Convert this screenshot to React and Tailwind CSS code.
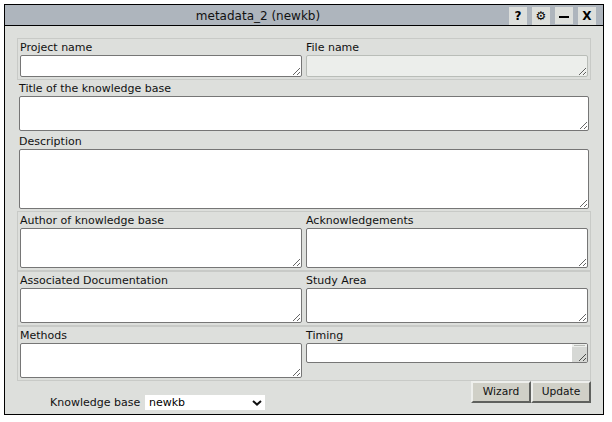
import React from "react";

function Area({ className, disabled, label }) {
  return (
    <textarea
      aria-label={label}
      disabled={disabled}
      className={`block resize rounded-[2px] border p-[2px] text-[11px] leading-[13px] outline-none ${
        disabled ? "border-[#b9bdb8] bg-[#eceeeb]" : "border-[#767676] bg-white"
      } ${className}`}
    />
  );
}

function Field({ label, area, disabled, children }) {
  return (
    <div className="w-[282px]">
      <div className="h-[16px] leading-[18px]">{label}</div>
      {children || <Area label={label} className={`w-full ${area}`} disabled={disabled} />}
    </div>
  );
}

function Pair({ children, className }) {
  return (
    <div className={`flex w-[574px] gap-[4px] border border-[#c8cac7] px-[2px] ${className}`}>
      {children}
    </div>
  );
}

function Wide({ label, className, area }) {
  return (
    <div className={`ml-[2px] w-[570px] ${className}`}>
      <div className="h-[16px] leading-[18px]">{label}</div>
      <Area label={label} className={`w-full ${area}`} />
    </div>
  );
}

function TitleButton({ children, className = "h-[18px] font-bold" }) {
  return (
    <button
      className={`flex w-[18px] items-center justify-center bg-[#dddfdc] text-[12px] leading-none text-black ${className}`}
    >
      {children}
    </button>
  );
}

function PushButton({ children }) {
  return (
    <button className="h-[22px] w-[60px] border-2 border-t-[#eeefec] border-l-[#eeefec] border-r-[#5f615e] border-b-[#5f615e] bg-[#d0d0c7] text-[10.67px] leading-[16px] text-[#111]">
      {children}
    </button>
  );
}

export default function App() {
  return (
    <div className="h-[422px] w-[612px] bg-white pt-[4px] pl-[4px] font-['DejaVu_Sans',sans-serif] text-[11px] text-[#111]">
      <div className="h-[411px] w-[600px] border border-black bg-[#dddfdc]">
        <div className="flex h-[21px] border-b border-black bg-[#aeb5bd]">
          <div className="flex-1 pl-[2px] text-center text-[12px] leading-[22px]">metadata_2 (newkb)</div>
          <div className="flex gap-[5px] pt-[2px] pr-[7px]">
            <TitleButton>?</TitleButton>
            <TitleButton className="h-[18px] font-normal">⚙</TitleButton>
            <TitleButton className="h-[17px]">
              <span className="mt-[3px] h-[2px] w-[10px] bg-black" />
            </TitleButton>
            <TitleButton>X</TitleButton>
          </div>
        </div>
        <div className="pt-[12px] pl-[12px]">
          <Pair className="h-[42px]">
            <Field label="Project name" area="h-[22px]" />
            <Field label="File name" area="h-[22px]" disabled />
          </Pair>
          <Wide label="Title of the knowledge base" area="h-[35px]" />
          <Wide label="Description" className="mt-[2px]" area="h-[60px]" />
          <Pair className="mt-[2px] h-[60px]">
            <Field label="Author of knowledge base" area="h-[40px]" />
            <Field label="Acknowledgements" area="h-[40px]" />
          </Pair>
          <Pair className="h-[55px]">
            <Field label="Associated Documentation" area="h-[35px]" />
            <Field label="Study Area" area="h-[35px]" />
          </Pair>
          <Pair className="h-[55px]">
            <Field label="Methods" area="h-[35px]" />
            <Field label="Timing">
              <div className="flex h-[20px] justify-end overflow-hidden rounded-[2px] border border-[#767676] bg-white">
                <svg width="15" height="18" viewBox="0 0 15 18" shapeRendering="crispEdges">
                  <rect width="15" height="18" fill="#d6d8d5" />
                  <rect width="15" height="3" fill="#eceeeb" />
                  <rect x="2" y="1" width="11" height="1" fill="#b9bcb8" />
                  <path
                    d="M7 16h1v1h-1zM8 15h1v1h-1zM9 14h1v1h-1zM10 13h1v1h-1zM11 12h1v1h-1zM12 11h1v1h-1zM13 10h1v1h-1zM11 16h1v1h-1zM12 15h1v1h-1zM13 14h1v1h-1z"
                    fill="#4d4f4c"
                  />
                </svg>
              </div>
            </Field>
          </Pair>
          <div className="flex w-[574px] justify-between">
            <div className="mt-[14px] ml-[33px] flex h-[15px] leading-[15px]">
              <span className="w-[95px]">Knowledge base</span>
              <div className="flex w-[120px] items-center justify-between bg-white pr-[3px] pl-[4px] text-black">
                <span>newkb</span>
                <svg width="10" height="6" viewBox="0 0 10 6" fill="none" stroke="#111" strokeWidth="2">
                  <path d="M1 1l4 3.6L9 1" />
                </svg>
              </div>
            </div>
            <div className="flex">
              <PushButton>Wizard</PushButton>
              <PushButton>Update</PushButton>
            </div>
          </div>
        </div>
      </div>
    </div>
  );
}
